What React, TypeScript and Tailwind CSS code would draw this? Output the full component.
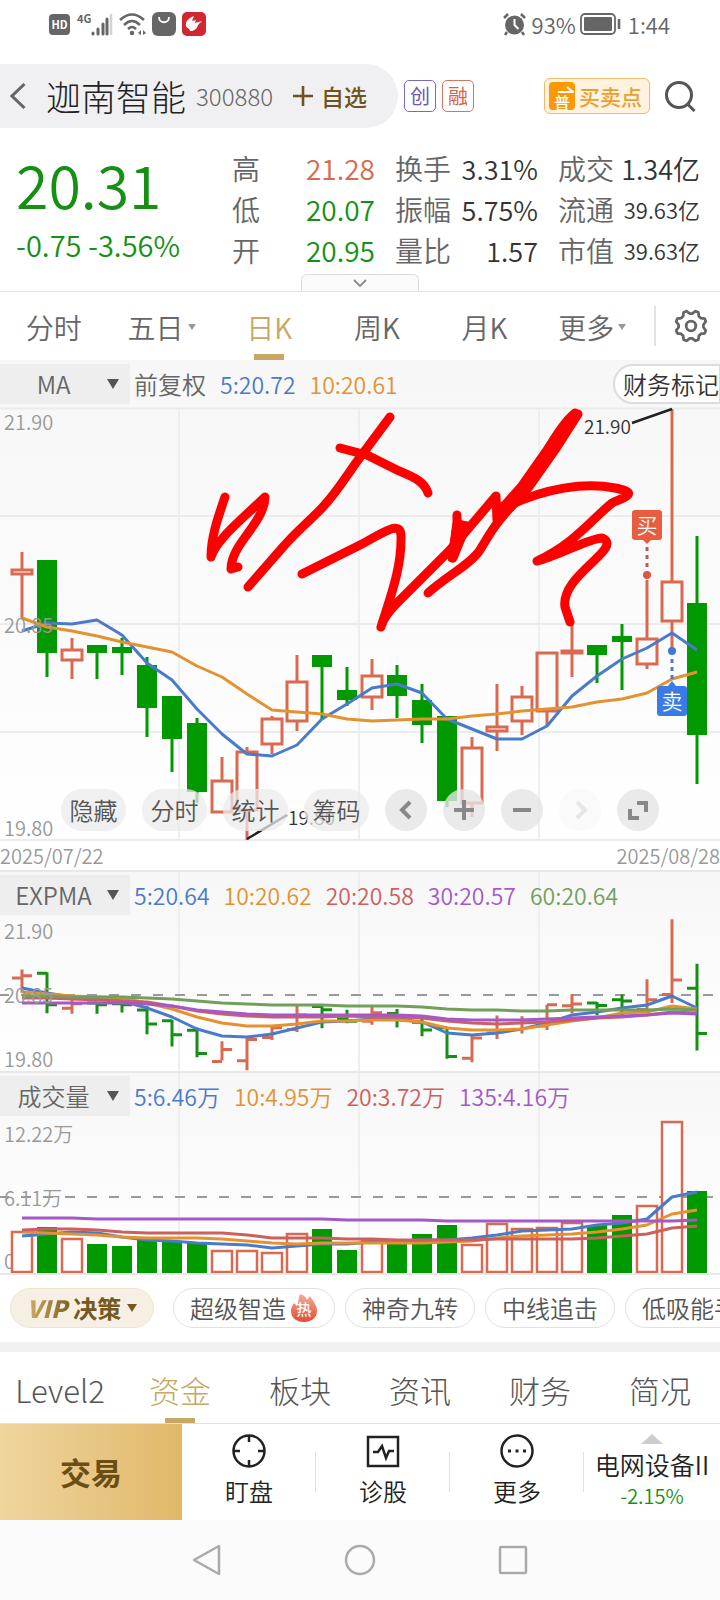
import type { ReactNode } from "react";
import clsx from "clsx";

interface Candle {
    up: boolean;
    high: number;
    top: number;
    bottom: number;
    low: number;
}

// up flag, then high / body top / body bottom / low, in chart units (0 = 21.90, 432 = 19.80)
const CANDLES: Candle[] = (
    [
        [1, 144, 162, 166, 211],
        [0, 152, 152, 245, 269],
        [1, 230, 242, 252, 271],
        [0, 237, 237, 245, 271],
        [0, 230, 239, 245, 267],
        [0, 249, 257, 300, 329],
        [0, 288, 288, 331, 364],
        [0, 310, 315, 384, 395],
        [1, 349, 373, 404, 404],
        [1, 339, 344, 402, 432],
        [1, 308, 311, 336, 346],
        [1, 247, 274, 313, 323],
        [0, 247, 247, 259, 312],
        [0, 259, 282, 292, 298],
        [1, 251, 268, 289, 302],
        [0, 257, 267, 288, 310],
        [0, 276, 292, 317, 335],
        [0, 308, 308, 393, 399],
        [1, 329, 340, 395, 409],
        [1, 276, 319, 323, 343],
        [1, 278, 289, 313, 327],
        [1, 245, 245, 303, 317],
        [1, 215, 243, 245, 269],
        [0, 237, 237, 247, 275],
        [0, 216, 228, 234, 282],
        [1, 172, 231, 256, 261],
        [1, 1, 174, 213, 240],
        [0, 128, 195, 327, 376],
    ] as const
).map(([up, high, top, bottom, low]) => ({ up: up === 1, high, top, bottom, low }));

const MA5 = [223, 215, 216, 212, 227, 255, 272, 301, 326, 346, 348, 337, 311, 296, 280, 276, 285, 311, 321, 331, 331, 318, 288, 268, 251, 240, 225, 242];
const MA10 = [210, 219, 223, 228, 234, 239, 244, 258, 269, 286, 302, 304, 306, 311, 313, 312, 311, 311, 308, 306, 303, 301, 299, 294, 291, 285, 271, 264];

const EXPMA = [
    { color: "#4a7bcb", points: [73, 78, 82, 83, 86, 93, 102, 114, 121, 122, 119, 113, 107, 106, 104, 104, 107, 118, 120, 118, 114, 108, 100, 97, 93, 90, 81, 93] },
    { color: "#e49230", points: [77, 79, 81, 82, 83, 88, 94, 102, 108, 111, 111, 109, 106, 106, 105, 105, 107, 113, 115, 115, 114, 110, 106, 103, 98, 97, 91, 94] },
    { color: "#cb5f68", points: [83, 83, 84, 85, 86, 87, 91, 96, 99, 101, 102, 102, 102, 101, 102, 102, 103, 106, 108, 109, 108, 107, 105, 103, 102, 100, 97, 98] },
    { color: "#a558c8", points: [88, 88, 88, 88, 88, 89, 91, 95, 97, 99, 100, 100, 100, 100, 100, 100, 101, 104, 105, 105, 105, 104, 103, 102, 101, 100, 98, 99] },
    { color: "#71a05b", points: [81, 81, 82, 82, 82, 83, 84, 86, 88, 89, 90, 90, 90, 91, 91, 91, 92, 94, 95, 95, 96, 96, 95, 95, 95, 95, 94, 95] },
];

const VOLUME_TOPS = [115, 111, 122, 128, 130, 124, 126, 127, 134, 134, 136, 117, 113, 134, 124, 126, 118, 109, 128, 107, 112, 111, 106, 109, 99, 89, 5, 75];
const VOLUME_LINES = [
    { color: "#4a7bcb", points: [120, 118, 116, 117, 121, 124, 125, 127, 128, 129, 132, 130, 128, 128, 126, 125, 124, 124, 122, 119, 115, 114, 113, 109, 107, 103, 81, 76] },
    { color: "#e49230", points: [116, 117, 118, 119, 121, 122, 122, 122, 123, 125, 127, 128, 127, 127, 127, 127, 127, 126, 125, 122, 120, 119, 118, 116, 113, 109, 98, 94] },
    { color: "#cb605c", points: [114, 113, 113, 114, 116, 117, 117, 117, 117, 119, 122, 122, 122, 123, 123, 124, 124, 124, 124, 123, 123, 123, 123, 122, 120, 118, 112, 110] },
    { color: "#a558c8", points: [102, 102, 102, 103, 103, 103, 103, 103, 103, 103, 103, 103, 103, 104, 104, 104, 104, 105, 105, 105, 105, 105, 105, 105, 105, 105, 105, 104] },
];

const RED = "#d9694f";
const GREEN = "#009900";

const xAt = (i: number) => 22 + i * 25;
const toPoints = (values: number[]) => values.map((v, i) => `${xAt(i)},${v}`).join(" ");

// Eight-toothed gear outline around (17, 17)
const GEAR = Array.from({ length: 32 }, (_, i) => {
    const tooth = i % 4 === 1 || i % 4 === 2;
    const angle = ((i * 11.25 + 5.6) * Math.PI) / 180;
    const r = tooth ? 15.5 : 12.5;
    return `${(17 + r * Math.cos(angle)).toFixed(1)},${(17 + r * Math.sin(angle)).toFixed(1)}`;
}).join(" ");

function Line({ values, color, width = 3 }: { values: number[]; color: string; width?: number }) {
    return <polyline points={toPoints(values)} fill="none" stroke={color} strokeWidth={width} strokeLinejoin="round" />;
}

function StatusBar() {
    return (
        <div className="flex h-12 items-center justify-between pr-[50px] pl-[49px] text-[#666]">
            <div className="flex items-center gap-1.5">
                <span className="flex h-[21px] w-[21px] items-center justify-center rounded bg-[#666] text-[11px] leading-none font-bold text-white">HD</span>
                <div className="ml-px flex items-start">
                    <span className="text-[11px] leading-3 font-bold">4G</span>
                    <svg width="22" height="24" viewBox="0 0 22 24">
                        <path d="M2 21v1M7 17v5M12 12v10M16 7v15" stroke="#666" strokeWidth="3" strokeLinecap="round" />
                        <path d="M20 3v19" stroke="#d2d2d2" strokeWidth="2.600" strokeLinecap="round" />
                    </svg>
                </div>
                <svg width="28" height="24" viewBox="0 0 28 24" fill="none" stroke="#666" strokeWidth="2.5">
                    <path d="M1 8Q13 -3 25 8M5 13Q13 5 21 13M9 17Q13 13 17 17" />
                    <circle cx="13" cy="21" r="1" fill="#666" />
                    <path d="M19 21l3-3v5zM27 21l-3-3v5z" fill="#666" stroke="none" />
                </svg>
                <svg width="24" height="24" viewBox="0 0 24 24" className="-ml-px">
                    <rect width="24" height="24" rx="6" fill="#666" />
                    <path d="M7 5c0 7 10 7 10 0" fill="none" stroke="#fff" strokeWidth="1.8" />
                </svg>
                <svg width="24" height="24" viewBox="0 0 24 24">
                    <rect width="24" height="24" rx="5" fill="#d22630" />
                    <path d="M12 4c-5 2-9 5-8 10 1 3 4 2 4 5 4 0 7-2 8-6l4-4-7 2 1-3-4 1z" fill="#fff" />
                </svg>
            </div>
            <div className="flex items-center gap-1.5">
                <svg width="23" height="23" viewBox="0 0 23 23">
                    <circle cx="11.5" cy="12" r="9.5" fill="#666" />
                    <path d="M1 5l4-4M22 5l-4-4M4 19l-2 3M19 19l2 3" stroke="#666" strokeWidth="2.5" />
                    <path d="M11.500 6v6l4 4" fill="none" stroke="#fff" strokeWidth="2" />
                </svg>
                <span className="text-[22px] leading-6">93%</span>
                <svg width="42" height="22" viewBox="0 0 42 22" className="-ml-0.5">
                    <rect x="1" y="1" width="34" height="20" rx="4" fill="none" stroke="#666" strokeWidth="1.8" />
                    <rect x="4" y="4" width="28" height="14" rx="1" fill="#666" />
                    <path d="M39 6v10" stroke="#666" strokeWidth="2.6" />
                </svg>
                <span className="text-[22px] leading-6">1:44</span>
            </div>
        </div>
    );
}

function Header() {
    return (
        <header className="mt-4 flex h-16 items-center">
            <div className="flex h-16 w-[398px] shrink-0 items-center rounded-r-full bg-[#f0f0f3] pl-2.5">
                <button aria-label="返回">
                    <svg width="16" height="26" viewBox="0 0 16 26" fill="none" stroke="#666" strokeWidth="3">
                        <path d="M14.500 1L2 13l12.500 12" />
                    </svg>
                </button>
                <h1 className="ml-5 text-[35px] leading-10 font-light whitespace-nowrap text-[#222]">迦南智能</h1>
                <span className="ml-2.5 text-[24px] leading-8 font-light text-[#666]">300880</span>
                <button className="ml-5 flex items-center gap-2 text-[23px] leading-8 font-medium whitespace-nowrap text-[#6e541c]">
                    <svg width="20" height="20" viewBox="0 0 20 20" stroke="currentColor" strokeWidth="2.600">
                        <path d="M10 0v20M0 10h20" />
                    </svg>
                    自选
                </button>
            </div>
            <span className="ml-1.5 flex h-8 w-8 items-center justify-center rounded-[5px] border border-[#7c68c4] text-[20px] leading-none font-normal text-[#6a55bb]">创</span>
            <span className="ml-1.5 flex h-8 w-8 items-center justify-center rounded-[5px] border border-[#d9735f] text-[20px] leading-none font-normal text-[#d9604a]">融</span>
            <button className="ml-auto flex h-9 w-[106px] items-center gap-1 rounded-md border border-[#eebc68] bg-[#fff3e0] pl-1 text-[21px] leading-none font-medium whitespace-nowrap text-[#e8a030]">
                <span className="flex h-7 w-[26px] shrink-0 flex-col items-center justify-end rounded bg-[#ff9800] text-[16px] leading-none text-white">
                    <svg width="16" height="8" viewBox="0 0 16 8" fill="none" stroke="#fff" strokeWidth="2" className="ml-2 shrink-0">
                        <path d="M0 6h15L9 1" />
                    </svg>
                    普
                </span>
                买卖点
            </button>
            <button aria-label="搜索" className="mr-6 ml-[15px]">
                <svg width="31" height="32" viewBox="0 0 31 32" fill="none" stroke="#555" strokeWidth="3">
                    <circle cx="14" cy="15" r="12.5" />
                    <path d="M22.500 24l7 7" />
                </svg>
            </button>
        </header>
    );
}

function Quote() {
    const rows = [
        ["高", "21.28", "text-[#d9694f]", "换手", "3.31%", "成交", "1.34亿", "text-[27px]"],
        ["低", "20.07", "text-[#149014]", "振幅", "5.75%", "流通", "39.63亿", "text-[22px]"],
        ["开", "20.95", "text-[#149014]", "量比", "1.57", "市值", "39.63亿", "text-[22px]"],
    ];
    return (
        <section className="relative flex h-[164px] border-b border-[#e2e2e2] pt-5 pr-5 pl-4">
            <div className="w-[216px] shrink-0 whitespace-nowrap text-[#149014]">
                <div className="text-[59px] leading-[72px]">20.31</div>
                <div className="mt-1 text-[29px] leading-10">-0.75 -3.56%</div>
            </div>
            <dl className="grid h-[123px] flex-1 grid-cols-[28px_1fr_56px_87px_76px_86px] items-center whitespace-nowrap text-[28px] leading-[41px] text-[#333]">
                {rows.map(([l1, v1, tone, l2, v2, l3, v3, size]) => (
                    <div key={l1} className="contents">
                        <dt className="text-[#666]">{l1}</dt>
                        <dd className={clsx("pr-5 text-right", tone)}>{v1}</dd>
                        <dt className="text-[#666]">{l2}</dt>
                        <dd className="text-right text-[27px]">{v2}</dd>
                        <dt className="pl-5 text-[#666]">{l3}</dt>
                        <dd className={clsx("text-right", size)}>{v3}</dd>
                    </div>
                ))}
            </dl>
            <button aria-label="展开" className="absolute bottom-0 left-1/2 flex h-[17px] w-[118px] -translate-x-1/2 items-center justify-center rounded-t-md border border-b-0 border-[#dcdcdc] bg-[#fafafa]">
                <svg width="14" height="8" viewBox="0 0 14 8" fill="none" stroke="#888" strokeWidth="1.8">
                    <path d="M1 1l6 6 6-6" />
                </svg>
            </button>
        </section>
    );
}

function PeriodTabs() {
    const tabs = [
        { label: "分时" },
        { label: "五日", more: true },
        { label: "日K", active: true },
        { label: "周K" },
        { label: "月K" },
        { label: "更多", more: true },
    ];
    return (
        <nav className="flex h-[68px] items-center">
            {tabs.map((tab) => (
                <button
                    key={tab.label}
                    className={clsx(
                        "relative flex h-full flex-1 items-center justify-center gap-1 pt-0.5 text-[28px] leading-10 whitespace-nowrap",
                        tab.active ? "text-[#c8a664]" : "text-[#666]",
                    )}
                >
                    {tab.label}
                    {tab.more && <Caret className="h-1.5 w-2 text-[#999]" />}
                    {tab.active && <span className="absolute bottom-0 left-1/2 h-1.5 w-[30px] -translate-x-1/2 bg-[#c8a664]" />}
                </button>
            ))}
            <span className="ml-2 h-10 w-0.5 bg-[#e2e2e2]" />
            <button aria-label="设置" className="pr-3 pl-[18px]">
                <svg width="34" height="34" viewBox="0 0 34 34" fill="none" stroke="#666" strokeWidth="2.800" strokeLinejoin="round">
                    <polygon points={GEAR} />
                    <circle cx="17" cy="17" r="4.800" />
                </svg>
            </button>
        </nav>
    );
}

function Caret({ className }: { className: string }) {
    return (
        <svg viewBox="0 0 12 10" className={className} preserveAspectRatio="none">
            <path d="M0 0h12L6 10z" fill="currentColor" />
        </svg>
    );
}

function IndicatorBar({ name, children }: { name: string; children: ReactNode }) {
    return (
        <div className="relative flex h-10 items-center text-[23px] leading-8 whitespace-nowrap">
            <button className="flex h-10 w-[130px] shrink-0 items-center bg-[#eee] pr-[11px] text-[24px] text-[#666]">
                <span className="flex-1 text-center">{name}</span>
                <Caret className="h-2.5 w-3 text-[#555]" />
            </button>
            <div className="ml-1 flex gap-3.5">{children}</div>
        </div>
    );
}

function AxisLabels({ labels, className }: { labels: string[]; className: string }) {
    return (
        <div className={clsx("pointer-events-none absolute inset-0 flex flex-col justify-between pl-1 text-[20px] leading-6 text-[#999]", className)}>
            {labels.map((label) => (
                <span key={label}>{label}</span>
            ))}
        </div>
    );
}

function ColumnRules() {
    return (
        <div className="pointer-events-none absolute inset-0 grid grid-cols-4">
            <span className="border-r-2 border-[#eee]" />
            <span className="border-r-2 border-[#eee]" />
            <span className="border-r-2 border-[#eee]" />
        </div>
    );
}

function Scribble() {
    return (
        <g fill="none" stroke="#ff0000" strokeWidth="9" strokeLinecap="round" strokeLinejoin="round">
            <path d="M225 89C217 112 211 130 211 149C216 132 240 113 265 89C264 116 231 136 231 161L238 159" />
            <path d="M390 9L358 52C345 70 335 87 320 102C305 117 295 125 283 139L248 179" />
            <path d="M340 40L367 47L397 62C410 68 424 72 428 85" />
            <path d="M302 166L360 137C380 127 400 111 401 127C402 160 390 190 381 219C383 210 390 202 398 194L450 142L496 88L497 112L505 97L521 79L547 42C556 28 565 13 575 5" />
            <path d="M457 107V115L453 150L466 118L458 132L461 117" />
            <path d="M452 150L457 116L466 118zM498 112L503 98L514 94z" fill="#ff0000" />
            <path d="M428 185C448 167 470 157 480 142C490 125 498 112 512 98L529 79L555 42L578 6" />
            <path d="M506 99C545 80 585 74 615 80C640 85 625 89 612 95C590 113 575 135 537 153C555 149 590 130 602 130C625 140 560 167 565 199L570 214" />
        </g>
    );
}

function KLineChart() {
    return (
        <svg viewBox="0 0 720 432" className="relative block h-auto w-full overflow-visible">
            <path d="M0 .5H720M0 108H720M0 216H720M0 324H720M0 432H720" stroke="#ebebeb" strokeWidth="2" />
            {CANDLES.map((c, i) => {
                const x = xAt(i);
                return c.up ? (
                    <g key={i} stroke={RED} strokeWidth="3" fill="none">
                        <path d={`M${x} ${c.high}V${c.top}M${x} ${c.bottom}V${c.low}`} />
                        <rect x={x - 10} y={c.top} width="20" height={c.bottom - c.top} />
                    </g>
                ) : (
                    <g key={i} fill={GREEN}>
                        <rect x={x - 1.5} y={c.high} width="3" height={c.low - c.high} />
                        <rect x={x - 10} y={c.top} width="20" height={c.bottom - c.top} />
                    </g>
                );
            })}
            <Line values={MA5} color="#4a7bcb" />
            <Line values={MA10} color="#e49230" />

            {/* High and low callouts */}
            <path d="M632 15L672 1M247 431L287 407" stroke="#222" strokeWidth="2.500" />
            <text x="584" y="26" fontSize="19" fill="#333">21.90</text>
            <text x="288" y="417" fontSize="19" fill="#333">19.80</text>

            {/* Buy marker */}
            <rect x="632" y="102" width="30" height="30" rx="3" fill="#e85c40" />
            <path d="M643 132h8l-4 4z" fill="#e85c40" />
            <path d="M647 139V160" stroke="#b5604e" strokeWidth="3" strokeDasharray="4 4" />
            <circle cx="647" cy="167" r="4" fill="#d9573e" />
            <text x="647" y="125" fontSize="21" fill="#fff" textAnchor="middle">买</text>

            {/* Sell marker */}
            <circle cx="672" cy="243" r="4" fill="#3c78dc" />
            <path d="M672 251V274" stroke="#4a7bcb" strokeWidth="3" strokeDasharray="4 4" />
            <path d="M668 278h8l-4-5z" fill="#3b7be6" />
            <rect x="657" y="278" width="30" height="30" rx="3" fill="#3b7be6" />
            <text x="672" y="301" fontSize="21" fill="#fff" textAnchor="middle">卖</text>

            <Scribble />
        </svg>
    );
}

function ChartTools() {
    const icons = [
        { label: "左移", d: "M25 13L17 21L25 29" },
        { label: "放大", d: "M21 11V31M11 21H31" },
        { label: "缩小", d: "M12 21H30" },
        { label: "右移", d: "M18 13L26 21L18 29", off: true },
        { label: "全屏", d: "M20 14H29V23M13 20V29H22" },
    ];
    return (
        <div className="absolute bottom-[9px] left-[61px] flex gap-4">
            {["隐藏", "分时", "统计", "筹码"].map((label) => (
                <button key={label} className="h-[42px] w-[65px] rounded-full bg-[#ebebeb]/75 text-[24px] leading-none whitespace-nowrap text-[#555]">
                    {label}
                </button>
            ))}
            {icons.map((icon) => (
                <button key={icon.label} aria-label={icon.label} className={clsx("h-[42px] w-[42px] rounded-full bg-[#e5e5e5]/80", icon.off && "opacity-20")}>
                    <svg viewBox="0 0 42 42" fill="none" stroke="#888" strokeWidth="4">
                        <path d={icon.d} />
                    </svg>
                </button>
            ))}
        </div>
    );
}

function MainPanel() {
    return (
        <section className="bg-gradient-to-b from-[#f7f7f8] to-white">
            <div className="relative flex items-center overflow-hidden py-1">
                <IndicatorBar name="MA">
                    <span className="text-[24px] text-[#666]">前复权</span>
                    <span className="text-[#4a7bcb]">5:20.72</span>
                    <span className="text-[#e49230]">10:20.61</span>
                </IndicatorBar>
                <button className="absolute left-[613px] h-10 rounded-l-full border-2 border-[#ddd] bg-white pl-2 text-[24px] leading-9 whitespace-nowrap text-[#333]">财务标记</button>
            </div>
            <div className="relative">
                <ColumnRules />
                <KLineChart />
                <AxisLabels labels={["21.90", "20.85", "19.80"]} className="pt-0.5" />
                <ChartTools />
            </div>
            <div className="flex h-8 items-center justify-between border-b-2 border-[#e8e8e8] bg-white pt-0.5 text-[20px] leading-6 text-[#999]">
                <span>2025/07/22</span>
                <span>2025/08/28</span>
            </div>
        </section>
    );
}

function ExpmaPanel() {
    const y = (v: number) => 4 + v * 0.35;
    return (
        <section className="relative border-b-2 border-[#e8e8e8] bg-gradient-to-b from-[#f7f7f8] to-white pt-[3px]">
            <ColumnRules />
            <IndicatorBar name="EXPMA">
                <span className="text-[#4a7bcb]">5:20.64</span>
                <span className="text-[#e49230]">10:20.62</span>
                <span className="text-[#cb605c]">20:20.58</span>
                <span className="text-[#a558c8]">30:20.57</span>
                <span className="text-[#71a05b]">60:20.64</span>
            </IndicatorBar>
            <div className="relative">
                <svg viewBox="0 0 720 156" className="relative block h-auto w-full">
                    <path d="M-1 80H720" stroke="#999" strokeWidth="2" strokeDasharray="10 12" />
                    {CANDLES.map((c, i) => {
                        const x = xAt(i);
                        const open = y(c.up ? c.bottom : c.top);
                        const close = y(c.up ? c.top : c.bottom);
                        return (
                            <path
                                key={i}
                                d={`M${x} ${y(c.high)}V${y(c.low)}M${x - 10} ${open + 1}H${x}M${x} ${close}H${x + 10}`}
                                stroke={c.up ? RED : "#149014"}
                                strokeWidth="3"
                            />
                        );
                    })}
                    {EXPMA.map((line) => (
                        <Line key={line.color} values={line.points} color={line.color} />
                    ))}
                </svg>
                <AxisLabels labels={["21.90", "20.85", "19.80"]} className="pt-1" />
            </div>
        </section>
    );
}

function VolumePanel() {
    return (
        <section className="relative border-b-2 border-[#e8e8e8] bg-gradient-to-b from-[#f7f7f8] to-white pt-[3px]">
            <ColumnRules />
            <IndicatorBar name="成交量">
                <span className="text-[#4a7bcb]">5:6.46万</span>
                <span className="text-[#e49230]">10:4.95万</span>
                <span className="text-[#cb605c]">20:3.72万</span>
                <span className="text-[#a558c8]">135:4.16万</span>
            </IndicatorBar>
            <div className="relative">
                <AxisLabels labels={["12.22万", "6.11万", "0"]} className="pt-1.5" />
                <svg viewBox="0 0 720 157" className="relative block h-auto w-full">
                    <path d="M-1 81H720" stroke="#999" strokeWidth="2" strokeDasharray="10 12" />
                    {VOLUME_TOPS.map((top, i) =>
                        CANDLES[i].up ? (
                            <rect key={i} x={xAt(i) - 10} y={top + 1} width="20" height={155 - top} fill="#fff" stroke={RED} strokeWidth="2.500" />
                        ) : (
                            <rect key={i} x={xAt(i) - 10} y={top} width="20" height={157 - top} fill={GREEN} />
                        ),
                    )}
                    {VOLUME_LINES.map((line) => (
                        <Line key={line.color} values={line.points} color={line.color} />
                    ))}
                </svg>
            </div>
        </section>
    );
}

function StrategyChips() {
    const chip = "flex h-10 shrink-0 items-center rounded-full border border-[#e2e2e2] px-4 text-[24px] leading-none text-[#555]";
    return (
        <div className="flex items-center gap-2.5 overflow-hidden pt-[13px] pb-3.5 pl-2.5 whitespace-nowrap">
            <button className="mr-[9px] flex h-10 w-36 shrink-0 items-center justify-center gap-0.5 rounded-full border border-[#efe6d2] bg-[#f6f0e4] text-[24px] leading-none font-bold text-[#75591f]">
                <i className="bg-gradient-to-r from-[#d5ae62] to-[#7c5f24] bg-clip-text pr-1 font-black text-transparent">VIP</i>
                决策
                <Caret className="ml-1 h-2 w-2.5" />
            </button>
            <button className={chip}>
                超级智造
                <svg width="28" height="30" viewBox="0 0 28 30" className="ml-1">
                    <defs>
                        <linearGradient id="flame" x1="0" y1="0" x2="0" y2="1">
                            <stop offset="0" stopColor="#f6ad9c" />
                            <stop offset="1" stopColor="#e6492f" />
                        </linearGradient>
                    </defs>
                    <path d="M10 1c4 1 6 3 7 6l3-4c3 5 7 9 7 15 0 7-6 11-13 11S1 25 1 18c0-4 2-6 3-8l3 3c2-4 1-8 3-12z" fill="url(#flame)" />
                    <text x="14" y="22" fontSize="15" fill="#fff" textAnchor="middle" fontWeight="500">热</text>
                </svg>
            </button>
            <button className={chip}>神奇九转</button>
            <button className={chip}>中线追击</button>
            <button className={chip}>低吸能手</button>
        </div>
    );
}

function InfoTabs() {
    return (
        <nav className="grid h-[72px] grid-cols-6 border-b border-[#e2e2e2]">
            {["Level2", "资金", "板块", "资讯", "财务", "简况"].map((label) => {
                const active = label === "资金";
                return (
                    <button key={label} className={clsx("relative pt-1 text-[31px] leading-10 font-light whitespace-nowrap", active ? "text-[#c8a664]" : "text-[#555]")}>
                        {label}
                        {active && <span className="absolute bottom-0 left-1/2 h-[5px] w-[30px] -translate-x-1/2 bg-[#c8a664]" />}
                    </button>
                );
            })}
        </nav>
    );
}

function ActionButton({ label, children }: { label: string; children: ReactNode }) {
    return (
        <button className="relative flex flex-1 flex-col items-center pt-2.5 text-[24px] leading-8 text-[#222]">
            <svg width="34" height="34" viewBox="0 0 34 34" fill="none" stroke="#222" strokeWidth="2.500">
                {children}
            </svg>
            <span className="mt-[7px]">{label}</span>
            <span className="absolute top-7 right-0 h-10 w-px bg-[#e2e2e2]" />
        </button>
    );
}

function ActionBar() {
    return (
        <div className="flex h-24">
            <button className="w-[182px] shrink-0 bg-gradient-to-r from-[#efd59e] to-[#e1b868] text-[31px] leading-10 font-bold text-[#6b4e14]">交易</button>
            <ActionButton label="盯盘">
                <circle cx="17" cy="17" r="15.500" />
                <path d="M17 1v7M17 26v7M1 17h7M26 17h7" />
            </ActionButton>
            <ActionButton label="诊股">
                <rect x="2" y="3" width="30" height="29" />
                <path d="M7 18h5l4-6 4 12 3-7h5" />
            </ActionButton>
            <ActionButton label="更多">
                <circle cx="17" cy="17" r="15.500" />
                <path d="M8 17h3M15.500 17h3M23 17h3" strokeWidth="3" />
            </ActionButton>
            <button className="flex w-[136px] shrink-0 flex-col items-center pt-2.5 whitespace-nowrap">
                <Caret className="h-2.5 w-[22px] rotate-180 text-[#ccc]" />
                <span className="mt-1 text-[25px] leading-8 text-[#222]">电网设备II</span>
                <span className="mt-1 text-[20px] leading-6 text-[#149014]">-2.15%</span>
            </button>
        </div>
    );
}

function SystemNav() {
    return (
        <div className="flex h-20 items-center justify-center gap-[121px] bg-[#fbfbfb]">
            <button aria-label="后退">
                <svg width="32" height="32" viewBox="0 0 32 32" fill="none" stroke="#aaa" strokeWidth="2.500" strokeLinejoin="round">
                    <path d="M28 2v28L3 16z" />
                </svg>
            </button>
            <button aria-label="主页">
                <svg width="32" height="32" viewBox="0 0 32 32" fill="none" stroke="#aaa" strokeWidth="2.500">
                    <circle cx="16" cy="16" r="14" />
                </svg>
            </button>
            <button aria-label="最近任务">
                <svg width="32" height="32" viewBox="0 0 32 32" fill="none" stroke="#aaa" strokeWidth="2.500">
                    <rect x="3" y="3" width="26" height="26" rx="1" />
                </svg>
            </button>
        </div>
    );
}

export default function App() {
    return (
        <main className="w-full overflow-x-hidden bg-white font-['Noto_Sans_CJK_SC',sans-serif] font-[350]">
            <StatusBar />
            <Header />
            <Quote />
            <PeriodTabs />
            <MainPanel />
            <ExpmaPanel />
            <VolumePanel />
            <StrategyChips />
            <div className="h-2.5 bg-[#f1f1f4]" />
            <InfoTabs />
            <ActionBar />
            <SystemNav />
        </main>
    );
}
